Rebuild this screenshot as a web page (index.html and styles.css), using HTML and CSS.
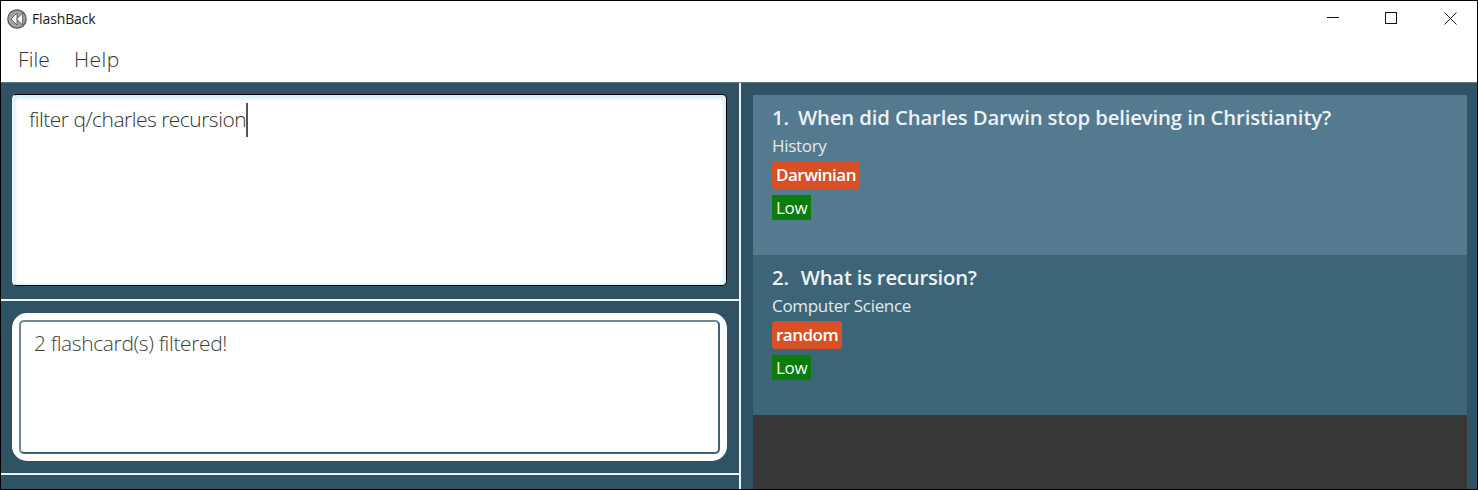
FILE: index.html
```html
<!DOCTYPE html>
<html lang="en">
<head>
<meta charset="utf-8">
<title>FlashBack</title>
<link rel="stylesheet" href="styles.css">
</head>
<body>
<div class="window">
  <header class="titlebar">
    <svg class="logo" width="20" height="20" viewBox="0 0 20 20">
      <circle cx="10" cy="10" r="9.2" fill="#a2a2a2" stroke="#555" stroke-width="1.2"/>
      <path d="M10 4 L4 10 L10 16 Z" fill="#f6f6f6" stroke="#4a4a4a" stroke-width="0.8"/>
      <path d="M15.6 4 L9.6 10 L15.6 16 Z" fill="#f6f6f6" stroke="#4a4a4a" stroke-width="0.8"/>
    </svg>
    <span class="app-name">FlashBack</span>
    <div class="controls">
      <svg class="control" viewBox="0 0 58 37"><path d="M24 16.5H36" stroke="#111" fill="none"/></svg>
      <svg class="control" viewBox="0 0 58 37"><rect x="24.5" y="11.5" width="11" height="11" stroke="#111" fill="none"/></svg>
      <svg class="control" viewBox="0 0 58 37"><path d="M25.5 11.5L37.5 23.5M37.5 11.5L25.5 23.5" stroke="#222" fill="none"/></svg>
    </div>
  </header>
  <nav class="menubar">
    <span class="menu-item">File</span>
    <span class="menu-item menu-item-wide">Help</span>
  </nav>
  <main class="main">
    <section class="left">
      <div class="pane pane-command">
        <div class="command-box"><span class="command-text">filter q/charles recursion</span><span class="caret"></span></div>
      </div>
      <div class="pane pane-result">
        <div class="result-outer"><div class="result-box">2 flashcard(s) filtered!</div></div>
      </div>
      <div class="pane-footer"></div>
    </section>
    <section class="right">
      <div class="list">
        <article class="card card-odd">
          <h2 class="question"><span class="num">1.</span>When did Charles Darwin stop believing in Christianity?</h2>
          <div class="category">History</div>
          <div class="tag-row"><span class="tag">Darwinian</span></div>
          <div class="level-row"><span class="level">Low</span></div>
        </article>
        <article class="card card-even">
          <h2 class="question"><span class="num">2.</span>What is recursion?</h2>
          <div class="category">Computer Science</div>
          <div class="tag-row"><span class="tag">random</span></div>
          <div class="level-row"><span class="level">Low</span></div>
        </article>
        <div class="list-empty"></div>
      </div>
    </section>
  </main>
</div>
</body>
</html>
```
FILE: styles.css
```css
* { box-sizing: border-box; }
html, body { margin: 0; padding: 0; }
body {
  width: 1478px;
  height: 490px;
  overflow: hidden;
  font-family: "Open Sans", "Noto Sans", sans-serif;
  background: #fff;
}
.window {
  width: 1478px;
  height: 490px;
  border: 1px solid #000;
  display: flex;
  flex-direction: column;
}
.titlebar {
  height: 37px;
  flex: none;
  display: flex;
  align-items: center;
  padding: 0 0 0 6px;
  background: #fff;
}
.logo { flex: none; margin-bottom: 2px; }
.app-name {
  margin: 0 0 3px 5px;
  font-size: 14px;
  letter-spacing: -0.12px;
  color: #1a1a1a;
}
.controls { margin-left: auto; display: flex; align-self: flex-start; }
.control { display: block; width: 58px; height: 37px; }
.menubar {
  height: 44px;
  flex: none;
  display: flex;
  align-items: center;
  gap: 24px;
  padding: 0 0 3px 17px;
  background: #fff;
}
.menu-item {
  font-size: 21px;
  font-weight: 300;
  letter-spacing: 0.1px;
  color: #333;
}
.menu-item-wide { letter-spacing: 0.5px; }
.main {
  flex: 1;
  display: flex;
  min-height: 0;
  background: #2f5264;
  border-top: 1px solid #5a7887;
}
.left {
  width: 740px;
  flex: none;
  display: flex;
  flex-direction: column;
  border-right: 2px solid #eef3f5;
}
.pane { padding: 12px 11px; border-bottom: 2px solid #eef3f5; }
.pane-command { height: 218px; padding-top: 11px; }
.pane-result { height: 174px; }
.pane-footer { flex: 1; }
.command-box {
  height: 192px;
  width: 715px;
  background: #fff;
  border-style: solid;
  border-width: 1px 1px 1px 2px;
  border-color: #000 #000 #000 #eef4f7;
  border-radius: 5px;
  box-shadow: inset 0 3px 3px 1px #dff0f7, inset -3px 0 3px 0 #dff0f7, inset 2px 0 2px 0 #e8f4f9, inset 0 -2px 2px 0 #e8f4f9;
  padding: 8px 15px;
  font-size: 21px;
  font-weight: 300;
  letter-spacing: -0.51px;
  color: #333;
  display: flex;
  align-items: flex-start;
}
.command-text { line-height: 33px; }
.caret {
  width: 2px;
  height: 34px;
  background: #555;
}
.result-outer {
  height: 148px;
  width: 715px;
  background: #fff;
  border-radius: 15px;
  padding: 7px;
}
.result-box {
  height: 134px;
  background: #fff;
  border-style: solid;
  border-width: 2px;
  border-color: #6f8896 #3f6172 #3f6172 #6f8896;
  border-radius: 5px;
  padding: 5px 13px;
  font-size: 21px;
  font-weight: 300;
  line-height: 33px;
  letter-spacing: -0.37px;
  color: #3f3d3a;
}
.right {
  flex: 1;
  padding: 12px 10px 0 12px;
  min-width: 0;
}
.list {
  height: 100%;
  display: flex;
  flex-direction: column;
  background: #383838;
}
.card {
  height: 160px;
  flex: none;
  padding: 7px 19px;
  color: #eef2f4;
}
.card-odd { background: #537a8f; }
.card-even { background: #3c6577; }
.list-empty { flex: 1; }
.question {
  margin: 0;
  font-size: 20.3px;
  font-weight: 600;
  line-height: 30px;
  letter-spacing: -0.12px;
  white-space: nowrap;
}
.num { margin-right: 9px; }
.card-even .question { letter-spacing: -0.22px; }
.card-even .num { margin-right: 12px; }
.category {
  font-size: 17px;
  line-height: 26px;
  margin-top: 1px;
  letter-spacing: -0.3px;
  color: #e3eaee;
}
.tag-row { margin-top: 2px; height: 28px; display: flex; }
.tag {
  background: #d75026;
  color: #fff;
  font-size: 17px;
  font-weight: 600;
  line-height: 28px;
  padding: 0 4px;
  border-radius: 3px;
  letter-spacing: -0.5px;
}
.level-row { margin-top: 6px; height: 25px; display: flex; }
.level {
  background: #0b7d0b;
  color: #fff;
  font-size: 17px;
  line-height: 25px;
  padding: 0 4px;
  letter-spacing: -0.3px;
}
```
